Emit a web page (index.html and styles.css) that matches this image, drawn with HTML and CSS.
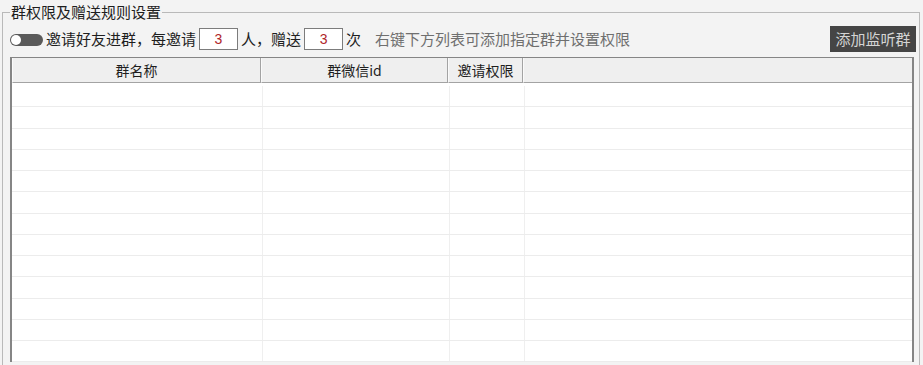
FILE: index.html
```html
<!DOCTYPE html>
<html lang="zh">
<head>
<meta charset="utf-8">
<title>群权限及赠送规则设置</title>
<link rel="stylesheet" href="styles.css">
</head>
<body>
<fieldset class="group">
  <legend class="group-title">群权限及赠送规则设置</legend>
  <div class="toolbar">
    <span class="toggle"><span class="knob"></span></span>
    <span class="label first">邀请好友进群，每邀请</span>
    <span class="num">3</span>
    <span class="label">人，赠送</span>
    <span class="num">3</span>
    <span class="label">次</span>
    <span class="hint">右键下方列表可添加指定群并设置权限</span>
    <button class="btn">添加监听群</button>
  </div>
  <div class="table">
    <div class="thead">
      <div class="th">群名称</div>
      <div class="th">群微信id</div>
      <div class="th">邀请权限</div>
      <div class="th last"></div>
    </div>
    <div class="tbody">
      <div class="tr"><div class="td"></div><div class="td"></div><div class="td"></div><div class="td"></div></div>
      <div class="tr"><div class="td"></div><div class="td"></div><div class="td"></div><div class="td"></div></div>
      <div class="tr"><div class="td"></div><div class="td"></div><div class="td"></div><div class="td"></div></div>
      <div class="tr"><div class="td"></div><div class="td"></div><div class="td"></div><div class="td"></div></div>
      <div class="tr"><div class="td"></div><div class="td"></div><div class="td"></div><div class="td"></div></div>
      <div class="tr"><div class="td"></div><div class="td"></div><div class="td"></div><div class="td"></div></div>
      <div class="tr"><div class="td"></div><div class="td"></div><div class="td"></div><div class="td"></div></div>
      <div class="tr"><div class="td"></div><div class="td"></div><div class="td"></div><div class="td"></div></div>
      <div class="tr"><div class="td"></div><div class="td"></div><div class="td"></div><div class="td"></div></div>
      <div class="tr"><div class="td"></div><div class="td"></div><div class="td"></div><div class="td"></div></div>
      <div class="tr"><div class="td"></div><div class="td"></div><div class="td"></div><div class="td"></div></div>
      <div class="tr"><div class="td"></div><div class="td"></div><div class="td"></div><div class="td"></div></div>
      <div class="tr"><div class="td"></div><div class="td"></div><div class="td"></div><div class="td"></div></div>
    </div>
  </div>
</fieldset>
</body>
</html>
```

FILE: styles.css
```css
html, body {
  margin: 0;
  padding: 0;
}
body {
  width: 923px;
  height: 365px;
  overflow: hidden;
  background: #f3f3f3;
  font-family: "Noto Sans CJK SC", "Microsoft YaHei", sans-serif;
  color: #1e1e1e;
}
.group {
  box-sizing: border-box;
  width: 918px;
  height: 362px;
  margin: 3px 0 0 2px;
  padding: 5px 4px 0 7px;
  border: 1px solid #b9b9b9;
  border-bottom: none;
  min-width: 0;
}
.group-title {
  font-size: 15px;
  line-height: 18px;
  padding: 0 1px;
  margin-left: 0;
  color: #1e1e1e;
}
.toolbar {
  display: flex;
  align-items: center;
  height: 26px;
  font-size: 15px;
  line-height: 18px;
}
.toggle {
  display: flex;
  align-items: center;
  box-sizing: border-box;
  width: 33px;
  height: 12px;
  border-radius: 6px;
  background: #5a5a5a;
  padding-left: 1px;
  margin-top: 1px;
}
.knob {
  width: 10px;
  height: 10px;
  border-radius: 50%;
  background: #ffffff;
}
.label.first {
  margin-left: 3px;
}
.num {
  box-sizing: border-box;
  width: 39px;
  height: 22px;
  margin: 0 3px;
  border: 1px solid #7c7c7c;
  background: #ffffff;
  color: #b0262b;
  font-family: "Liberation Sans", Arial, sans-serif;
  font-size: 14px;
  line-height: 20px;
  text-align: center;
}
.hint {
  margin-left: 14px;
  color: #6f6f6f;
}
.btn {
  margin-left: auto;
  margin-right: -1px;
  width: 86px;
  height: 26px;
  padding: 0;
  border: none;
  background: #454545;
  color: #d4d4d4;
  font-family: inherit;
  font-size: 15px;
  line-height: 26px;
}
.table {
  box-sizing: border-box;
  margin-top: 5px;
  width: 904px;
  border: 1px solid #858585;
  border-left-width: 2px;
  border-right-width: 2px;
  border-bottom: none;
  background: #ffffff;
}
.thead {
  display: grid;
  grid-template-columns: 249px 187px 75px 1fr;
  height: 25px;
  background: #efefef;
}
.th {
  box-sizing: border-box;
  border-right: 1px solid #a3a3a3;
  border-bottom: 1px solid #a3a3a3;
  border-left: 1px solid #fafafa;
  font-size: 14px;
  line-height: 24px;
  text-align: center;
  color: #1e1e1e;
}
.th.last {
  border-right: none;
}
.tbody {
  padding-top: 3px;
}
.tr {
  display: grid;
  grid-template-columns: 251px 187px 75px 1fr;
  box-sizing: border-box;
  height: 21.25px;
  border-bottom: 1px solid #ececec;
}
.td {
  border-right: 1px solid #efefef;
}
.td:last-child {
  border-right: none;
}
```
